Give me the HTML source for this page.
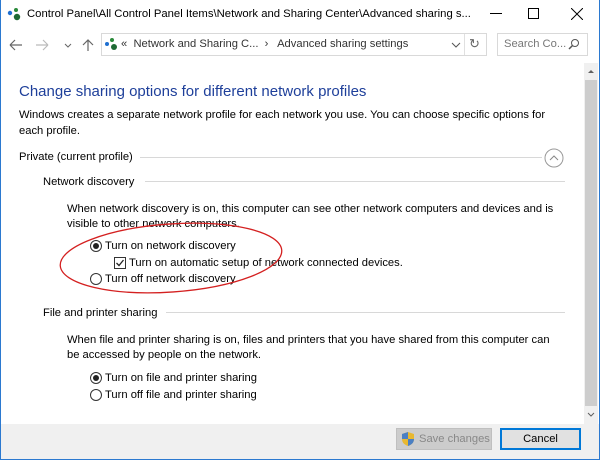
<!DOCTYPE html>
<html><head><style>
*{margin:0;padding:0;box-sizing:border-box}
body{width:600px;height:460px;overflow:hidden;background:#fff;font-family:"Liberation Sans",sans-serif;font-size:11.2px;color:#000;position:relative}
.a{position:absolute;white-space:nowrap}
.line{position:absolute;height:1px;background:#d8d8d8}
.rad{position:absolute;width:12px;height:12px;border:1px solid #333;border-radius:50%;background:#fff}
.rad.on::after{content:"";position:absolute;left:2px;top:2px;width:6px;height:6px;border-radius:50%;background:#222}
</style></head><body>
<div class="a" style="left:0;top:0;width:600px;height:460px;border:1px solid #2b79d0;border-top:none"></div>
<svg class="a" style="left:7px;top:7px" width="14" height="14"><circle cx="3" cy="6" r="2.2" fill="#1f6fd0"/><circle cx="9" cy="3" r="2" fill="#2a8a3a"/><circle cx="10" cy="10" r="3.2" fill="#1e6a34"/></svg>
<div class="a" style="left:27px;top:8px;font-size:11.3px">Control Panel\All Control Panel Items\Network and Sharing Center\Advanced sharing s...</div>
<div class="a" style="left:490px;top:13px;width:12px;height:1px;background:#000"></div>
<div class="a" style="left:528px;top:8px;width:11px;height:11px;border:1px solid #000"></div>
<svg class="a" style="left:571px;top:8px" width="12" height="12"><path d="M0 0L12 12M12 0L0 12" stroke="#000"/></svg>
<svg class="a" style="left:8px;top:38px" width="90" height="14"><path d="M2 7H14M2 7L7 2M2 7L7 12" stroke="#666" fill="none" stroke-width="1.2"/><path d="M28 7H40M40 7L35 2M40 7L35 12" stroke="#bbb" fill="none" stroke-width="1.2"/><path d="M57 6L60 9L63 6" stroke="#666" fill="none"/><path d="M80 13V2M75 7L80 2L85 7" stroke="#666" fill="none" stroke-width="1.2"/></svg>
<div class="a" style="left:101px;top:33px;width:386px;height:23px;border:1px solid #d9d9d9"></div>
<svg class="a" style="left:104px;top:37px" width="14" height="14"><circle cx="3" cy="7" r="2" fill="#1f6fd0"/><circle cx="8" cy="3" r="2" fill="#2a8a3a"/><circle cx="10" cy="10" r="3" fill="#1e6a34"/></svg>
<div class="a" style="left:121px;top:38px;color:#333">«&nbsp; Network and Sharing C... &nbsp;›&nbsp;&nbsp; Advanced sharing settings</div>
<svg class="a" style="left:451px;top:40px" width="10" height="10"><path d="M1 3L5 7L9 3" stroke="#555" fill="none"/></svg>
<div class="a" style="left:464px;top:34px;width:1px;height:21px;background:#e0e0e0"></div>
<div class="a" style="left:469px;top:36px;color:#666;font-size:13px">↻</div>
<div class="a" style="left:497px;top:33px;width:91px;height:23px;border:1px solid #d9d9d9"></div>
<div class="a" style="left:504px;top:38px;color:#777">Search Co...</div>
<svg class="a" style="left:568px;top:38px" width="12" height="12"><circle cx="7" cy="5" r="3.5" stroke="#555" fill="none"/><path d="M4.5 7.5L1 11" stroke="#555" stroke-width="1.5"/></svg>
<div class="a" style="left:584px;top:63px;width:14px;height:361px;background:#f0f0f0"></div>
<div class="a" style="left:585px;top:80px;width:12px;height:326px;background:#cdcdcd"></div>
<svg class="a" style="left:586px;top:67px" width="10" height="8"><path d="M2 6L5 3L8 6" fill="#606060"/></svg>
<svg class="a" style="left:586px;top:411px" width="10" height="8"><path d="M2 2L5 5L8 2" stroke="#606060" fill="none"/></svg>
<div class="a" style="left:19px;top:83px;font-size:15px;color:#1e3f9a">Change sharing options for different network profiles</div>
<div class="a" style="left:19px;top:109px">Windows creates a separate network profile for each network you use. You can choose specific options for</div>
<div class="a" style="left:19px;top:125px">each profile.</div>
<div class="a" style="left:19px;top:151px">Private (current profile)</div>
<div class="line" style="left:140px;top:157px;width:402px"></div>
<svg class="a" style="left:544px;top:148px" width="20" height="20"><circle cx="10" cy="10" r="9" stroke="#999" fill="none"/><path d="M6 12L10 8L14 12" stroke="#888" fill="none"/></svg>
<div class="a" style="left:43px;top:176px">Network discovery</div>
<div class="line" style="left:145px;top:181px;width:420px"></div>
<div class="a" style="left:67px;top:203px">When network discovery is on, this computer can see other network computers and devices and is</div>
<div class="a" style="left:67px;top:218px">visible to other network computers.</div>
<div class="rad on" style="left:90px;top:240px"></div>
<div class="a" style="left:105px;top:240px">Turn on network discovery</div>
<div class="a" style="left:114px;top:257px;width:12px;height:12px;border:1px solid #333"></div>
<svg class="a" style="left:115px;top:258px" width="10" height="10"><path d="M1.5 5L4 7.5L8.5 2" stroke="#222" fill="none" stroke-width="1.3"/></svg>
<div class="a" style="left:129px;top:257px">Turn on automatic setup of network connected devices.</div>
<div class="rad" style="left:90px;top:273px"></div>
<div class="a" style="left:105px;top:273px">Turn off network discovery</div>
<svg class="a" style="left:0;top:0" width="600" height="460"><ellipse cx="171" cy="258" rx="111" ry="34" transform="rotate(-4 171 258)" stroke="#d42020" stroke-width="1.3" fill="none"/></svg>
<div class="a" style="left:43px;top:307px">File and printer sharing</div>
<div class="line" style="left:166px;top:312px;width:399px"></div>
<div class="a" style="left:67px;top:334px">When file and printer sharing is on, files and printers that you have shared from this computer can</div>
<div class="a" style="left:67px;top:349px">be accessed by people on the network.</div>
<div class="rad on" style="left:90px;top:372px"></div>
<div class="a" style="left:105px;top:372px">Turn on file and printer sharing</div>
<div class="rad" style="left:90px;top:389px"></div>
<div class="a" style="left:105px;top:389px">Turn off file and printer sharing</div>
<div class="a" style="left:1px;top:424px;width:598px;height:35px;background:#f0f0f0"></div>
<div class="a" style="left:396px;top:428px;width:96px;height:22px;background:#ccc;border:1px solid #bfbfbf"></div>
<svg class="a" style="left:401px;top:431px" width="14" height="16"><path d="M7 1L13 3V8C13 12 10 14 7 15C4 14 1 12 1 8V3Z" fill="#e8b830"/><path d="M7 1V8H1V3ZM7 8H13C13 12 10 14 7 15Z" fill="#4a7fc4"/></svg>
<div class="a" style="left:419px;top:433px;color:#888">Save changes</div>
<div class="a" style="left:500px;top:428px;width:81px;height:22px;background:#e1e1e1;border:2px solid #0078d7"></div>
<div class="a" style="left:500px;top:433px;width:81px;text-align:center">Cancel</div>
</body></html>
